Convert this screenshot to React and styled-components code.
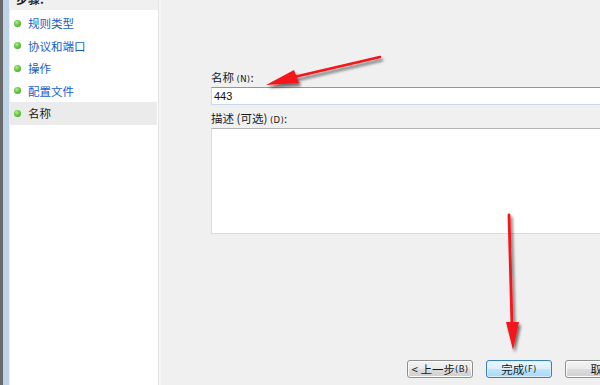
import React from 'react';
import styled, { createGlobalStyle } from 'styled-components';

const steps = [
    { name: '规则类型', done: true },
    { name: '协议和端口', done: true },
    { name: '操作', done: true },
    { name: '配置文件', done: true },
    { name: '名称', current: true },
];

const GlobalStyle = createGlobalStyle`
    html, body {
        margin: 0;
        padding: 0;
        background: #f0f0f0;
    }
    body {
        font-family: "Noto Sans CJK SC", "Liberation Sans", sans-serif;
        font-size: 12px;
    }
`;

const App = () => {
    return (
        <>
            <GlobalStyle />
            <Window>
                <Frame />
                <StepsPanel>
                    <StepsHeader>
                        <span>步骤:</span>
                    </StepsHeader>
                    <StepList>
                        {steps.map(item => (
                            <StepRow key={item.name} current={item.current}>
                                <Bullet />
                                <StepName current={item.current}>{item.name}</StepName>
                            </StepRow>
                        ))}
                    </StepList>
                </StepsPanel>
                <Main>
                    <Form>
                        <Label>名称 <Key>(N)</Key>:</Label>
                        <TextInput>443</TextInput>
                        <Label>描述 (可选) <Key>(D)</Key>:</Label>
                        <TextArea />
                    </Form>
                    <ButtonBar>
                        <Button>&lt; 上一步 <Key>(B)</Key></Button>
                        <Button focused>完成 <Key>(F)</Key></Button>
                        <Button>取消</Button>
                    </ButtonBar>
                </Main>

                {/* 빨간 화살표 */}
                <Arrows width="600" height="385" viewBox="0 0 600 385">
                    <defs>
                        <filter id="shadow" x="-20%" y="-20%" width="140%" height="140%">
                            <feGaussianBlur in="SourceAlpha" stdDeviation="1.6" />
                            <feOffset dx="2" dy="3" result="blur" />
                            <feComponentTransfer>
                                <feFuncA type="linear" slope="0.55" />
                            </feComponentTransfer>
                            <feMerge>
                                <feMergeNode />
                                <feMergeNode in="SourceGraphic" />
                            </feMerge>
                        </filter>
                    </defs>
                    <g filter="url(#shadow)" fill="#f5141a" stroke="#f5141a">
                        <line x1="380" y1="57" x2="294" y2="77" strokeWidth="2.6" strokeLinecap="round" />
                        <polygon points="266,85 294,70 299,83" stroke="none" />
                        <line x1="509" y1="215" x2="512" y2="326" strokeWidth="2.8" strokeLinecap="round" />
                        <polygon points="506,322 519,322 513,350" stroke="none" />
                    </g>
                </Arrows>
            </Window>
        </>
    );
}

const Window = styled.div`
    position: relative;
    display: flex;
    width: 600px;
    height: 385px;
    overflow: hidden;
    background: #f0f0f0;
`;
const Frame = styled.div`
    width: 6px;
    flex-shrink: 0;
    border-left: 3px solid #6a6a6a;
    margin-right: 1px;
    background: #bcd4ea;
`;
const StepsPanel = styled.div`
    display: flex;
    flex-direction: column;
    width: 148px;
    flex-shrink: 0;
    background: #ffffff;
    border-right: 1px solid #e4e4e4;
`;
const StepsHeader = styled.div`
    height: 10px;
    overflow: hidden;
    background: #f0f0f0;
    padding-left: 6px;

    span {
        display: block;
        margin-top: -9px;
        font-weight: bold;
        font-size: 12px;
        line-height: 16px;
        color: #1e1e1e;
    }
`;
const StepList = styled.div`
    display: flex;
    flex-direction: column;
    padding-top: 2px;
`;
const StepRow = styled.div`
    display: flex;
    align-items: center;
    height: 22.5px;
    padding-left: 4px;
    margin-right: 1px;
    background: ${(props) => props.current ? '#ebebeb' : 'transparent'};
`;
const Bullet = styled.span`
    width: 7px;
    height: 7px;
    border-radius: 50%;
    background: radial-gradient(circle at 40% 35%, #b4ee8c 0%, #5cc43a 50%, #3c9a22 100%);
    margin-right: 7px;
`;
const StepName = styled.span`
    font-size: 11.5px;
    color: ${(props) => props.current ? '#1a1a1a' : '#1660c8'};
`;
const Main = styled.div`
    flex: 1;
    display: flex;
    flex-direction: column;
    padding-left: 50px;
    border-left: 2px solid #f6f6f6;
`;
const Form = styled.div`
    display: flex;
    flex-direction: column;
    padding-top: 69px;
    width: 420px;
`;
const Label = styled.div`
    height: 16px;
    font-size: 11.5px;
    line-height: 16px;
    color: #1a1a1a;
    margin-bottom: 2px;
    white-space: nowrap;
`;
const Key = styled.span`
    font-family: "DejaVu Sans", sans-serif;
    font-size: 8.5px;
    line-height: 10px;
    letter-spacing: 0.3px;
`;
const TextInput = styled.div`
    box-sizing: border-box;
    height: 18px;
    background: #ffffff;
    border: 1px solid #c5d9ea;
    border-top-color: #7c9cbc;
    padding: 1px 2px;
    font-family: "Liberation Sans", sans-serif;
    font-size: 11px;
    line-height: 14px;
    color: #111;
    margin-bottom: 5px;
`;
const TextArea = styled.div`
    height: 106px;
    box-sizing: border-box;
    background: #ffffff;
    border: 1px solid #dadada;
    border-top-color: #b4b4b4;
`;
const ButtonBar = styled.div`
    display: flex;
    gap: 13px;
    margin-top: auto;
    margin-bottom: 7px;
    padding-left: 196px;
`;
const Button = styled.div`
    flex-shrink: 0;
    width: 66px;
    height: 18px;
    box-sizing: border-box;
    display: flex;
    align-items: center;
    justify-content: center;
    border: 1px solid ${(props) => props.focused ? '#3c7fb1' : '#8e8f8f'};
    border-radius: 3px;
    background: ${(props) => props.focused
        ? 'linear-gradient(#eaf6fd, #d9f0fc 50%, #bee6fd 51%, #a7d9f5)'
        : 'linear-gradient(#f2f2f2, #ebebeb 50%, #dddddd 51%, #cfcfcf)'};
    box-shadow: inset 0 0 0 1px ${(props) => props.focused ? '#d8eefb' : '#fcfcfc'};
    font-size: 11.5px;
    white-space: nowrap;
    color: #1a1a1a;
    &:last-child {
        width: 74px;
    }
`;
const Arrows = styled.svg`
    position: absolute;
    left: 0;
    top: 0;
    pointer-events: none;
`;

export default App;
